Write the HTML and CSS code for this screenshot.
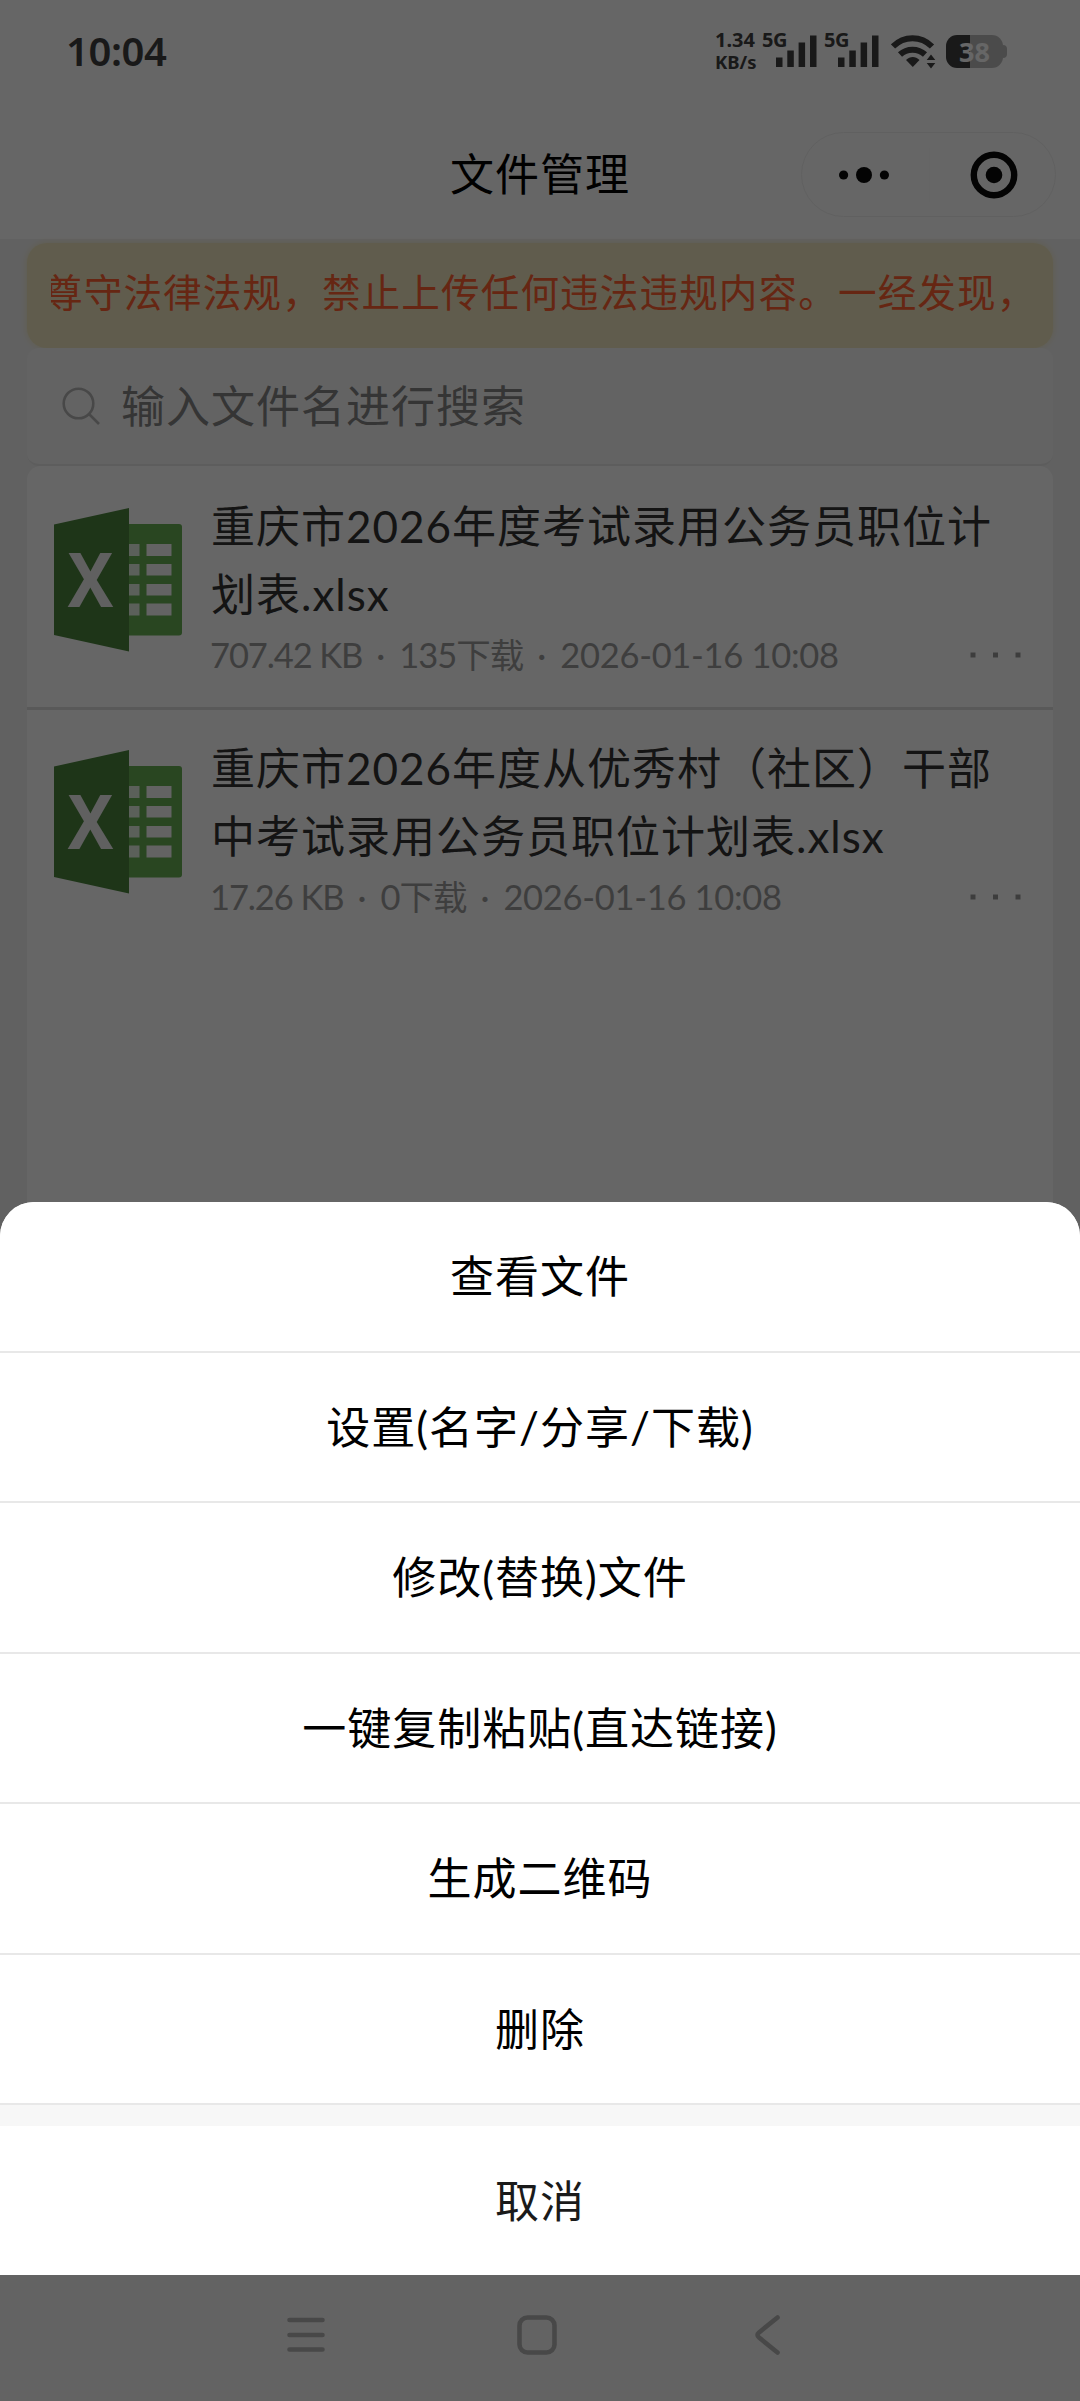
FILE: index.html
```html
<!DOCTYPE html>
<html lang="zh-CN">
<head>
<meta charset="utf-8">
<title>文件管理</title>
<link rel="stylesheet" href="styles.css">
</head>
<body>
<svg class="defs" width="0" height="0">
  <symbol id="xlsx" viewBox="0 0 128 144">
    <rect x="60" y="16" width="68" height="111.500" rx="3" fill="#66ae54"/>
    <path fill="#e4efe2" d="M75 36h10.500v12H75zM75 56h10.500v11.500H75zM75 76h10.500v11.500H75zM75 95.500h10.500v12H75z"/>
    <path fill="#f8f8f8" d="M92.500 36h25v12h-25zM92.500 56h25v11.500h-25zM92.500 76h25v11.500h-25zM92.500 95.500h25v12h-25z"/>
    <path fill="#4c843e" d="M0 16.500 75 0v143.500L0 127z"/>
    <text x="13.500" y="98.700" textLength="46" lengthAdjust="spacingAndGlyphs" class="xlsx-letter">X</text>
  </symbol>
  <symbol id="signal" viewBox="0 0 41 33">
    <path d="M0 22.500h6.500V32H0zM11.300 15.500h6.500V32h-6.500zM22.600 7.500h6.500V32h-6.500zM34 .500h6.500V32H34z"/>
  </symbol>
  <symbol id="more" viewBox="0 0 52 6">
    <path d="M.500.500h5v5h-5zM23 .500h5v5h-5zM45.500.500h5v5h-5z"/>
  </symbol>
</svg>
<div class="screen">
  <header class="status">
    <span class="clock">10:04</span>
    <div class="status-right">
      <div class="speed"><span class="speed-num">1.34</span><span>KB/s</span></div>
      <div class="cell"><span>5G</span><svg width="41" height="33"><use href="#signal"/></svg></div>
      <div class="cell"><span>5G</span><svg width="41" height="33"><use href="#signal"/></svg></div>
      <svg class="wifi" width="45" height="34" viewBox="0 0 45 34">
        <path d="M2 11.500C13 .500 30 .500 41 11.500" fill="none" stroke="#3f3f3f" stroke-width="6"/>
        <path d="M9 19.500c7-6.500 18-6.500 25 0" fill="none" stroke="#3f3f3f" stroke-width="6"/>
        <path d="M15 25c4-4 9.500-4 13.500 0l-6.700 7z"/>
        <path d="m40 19.500 4.300 5.500h-8.600zM40 33.500l4.300-5.500h-8.600z"/>
      </svg>
      <div class="battery"><span>38</span></div>
    </div>
  </header>
  <div class="titlebar">
    <h1>文件管理</h1>
    <div class="capsule">
      <svg width="50" height="18" viewBox="0 0 50 18"><circle cx="4.600" cy="9" r="4.600"/><circle cx="25" cy="9" r="8"/><circle cx="45.400" cy="9" r="4.600"/></svg>
      <i class="capsule-line"></i>
      <svg width="48" height="48" viewBox="0 0 48 48"><circle cx="24" cy="24" r="20.200" fill="none" stroke="#0b0b0b" stroke-width="6.400"/><circle cx="24" cy="24" r="8.300"/></svg>
    </div>
  </div>
  <main class="content">
    <div class="notice"><div class="notice-view"><p>尊守法律法规，禁止上传任何违法违规内容。一经发现，</p></div></div>
    <div class="search">
      <svg width="38" height="38" viewBox="0 0 38 38" fill="none" stroke="#b4b4b4" stroke-width="2.600"><circle cx="16.500" cy="16.500" r="14.800"/><path d="m27 27 10 10"/></svg>
      <span>输入文件名进行搜索</span>
    </div>
    <section class="list">
      <article class="file">
        <svg class="file-icon" width="128" height="144"><use href="#xlsx"/></svg>
        <div class="file-body">
          <h2>重庆市2026年度考试录用公务员职位计划表.xlsx</h2>
          <div class="meta"><span class="size">707.42 KB</span><span>·</span><span class="count">135下载</span><span>·</span><span class="date">2026-01-16 10:08</span><svg class="more" width="52" height="6"><use href="#more"/></svg></div>
        </div>
      </article>
      <article class="file">
        <svg class="file-icon" width="128" height="144"><use href="#xlsx"/></svg>
        <div class="file-body">
          <h2>重庆市2026年度从优秀村（社区）干部中考试录用公务员职位计划表.xlsx</h2>
          <div class="meta"><span class="size">17.26 KB</span><span>·</span><span class="count">0下载</span><span>·</span><span class="date">2026-01-16 10:08</span><svg class="more" width="52" height="6"><use href="#more"/></svg></div>
        </div>
      </article>
    </section>
  </main>
  <nav class="sysnav">
    <svg width="38" height="40" viewBox="0 0 38 40"><path d="M2.500 5h33M2.500 20h33M2.500 34.500h33"/></svg>
    <svg class="home" width="40" height="40" viewBox="0 0 40 40"><rect x="2.500" y="2.500" width="35" height="35" rx="8"/></svg>
    <svg width="28" height="40" viewBox="0 0 28 40"><path d="M24.500 2.500 6 17.500q-3 2.500 0 5L24.500 37.500"/></svg>
  </nav>
</div>
<div class="mask">
  <div class="sheet">
    <button>查看文件</button>
    <button>设置(名字/分享/下载)</button>
    <button>修改(替换)文件</button>
    <button>一键复制粘贴(直达链接)</button>
    <button>生成二维码</button>
    <button>删除</button>
    <button class="cancel">取消</button>
  </div>
</div>
</body>
</html>
```
FILE: styles.css
```css
* { box-sizing: border-box; }
body, h1, h2, p { margin: 0; font-weight: 400; }
body {
  position: relative;
  width: 1080px;
  height: 2401px;
  overflow: hidden;
  font-family: Lato, "Noto Sans CJK SC", sans-serif;
  font-size: 44px;
  letter-spacing: 1px;
  background: #fff;
}
svg { display: block; flex: none; }
.defs { position: absolute; }
.screen { display: flex; flex-direction: column; height: 2401px; }

/* status bar */
.status {
  display: flex;
  justify-content: space-between;
  height: 104px;
  padding: 0 72px 0 66px;
  color: #3f3f3f;
  fill: #3f3f3f;
  font-family: "Noto Sans", sans-serif;
  letter-spacing: 0;
}
.clock { padding-top: 30px; font-size: 40px; font-weight: 600; line-height: 42px; letter-spacing: -.4px; }
.status-right { display: flex; align-items: flex-start; padding-top: 29px; }
.speed {
  display: flex;
  flex-direction: column;
  width: 47px;
  font-size: 18.500px;
  font-weight: 700;
  line-height: 21.500px;
}
.speed-num { font-size: 20px; }
.cell { display: flex; width: 62px; padding-top: 6px; }
.cell span {
  width: 14px;
  margin-top: -6px;
  font-size: 20px;
  font-weight: 700;
  line-height: 22px;
  letter-spacing: -.5px;
}
.wifi { margin: 6px 10px 0 5px; }
.battery {
  position: relative;
  width: 57px;
  height: 33px;
  margin: 6px 5px 0 0;
  border-radius: 11px;
  background: linear-gradient(90deg, #3f3f3f 24px, #bcbcbc 24px);
  color: #fff;
  font-size: 27px;
  font-weight: 700;
  line-height: 34px;
  text-align: center;
}
.battery::after {
  content: "";
  position: absolute;
  left: 57px;
  top: 10px;
  width: 4px;
  height: 13px;
  border-radius: 0 4px 4px 0;
  background: #bcbcbc;
}

/* mini program title bar */
.titlebar {
  display: grid;
  grid-template-columns: 1fr auto 1fr;
  align-items: center;
  height: 135px;
  padding: 0 24px;
}
.titlebar h1 { grid-column: 2; padding-top: 5px; font-size: 44px; line-height: 60px; }
.capsule {
  display: flex;
  align-items: center;
  justify-self: end;
  justify-content: space-between;
  width: 255px;
  height: 85px;
  margin-top: 6px;
  padding: 0 37px;
  border: 1px solid #f1f1f1;
  border-radius: 43px;
  fill: #0b0b0b;
}
.capsule-line { width: 1px; height: 54px; margin-right: 1px; background: #fcfcfc; }

/* page */
.content { flex: 1; padding: 4px 27px 0; background: #f3f3f3; }
.notice {
  height: 105px;
  padding: 0 24px;
  border-radius: 20px;
  background: #f0e7c0;
  box-shadow: 0 0 7px #f0e7c0;
}
.notice-view { overflow: hidden; }
.notice p {
  margin-left: -7px;
  color: #ff6030;
  font-size: 38.600px;
  line-height: 98px;
  letter-spacing: 1.120px;
  white-space: nowrap;
}
.search {
  display: flex;
  align-items: center;
  gap: 21px;
  height: 118px;
  padding: 0 35px 2px;
  border-bottom: 2px solid #e8e8e8;
  border-radius: 12px;
  background: #f8f8f8;
  color: #858585;
}
.search svg { margin-top: 2px; }
.search span { margin-top: -3px; }
.list { height: 1000px; border-radius: 14px 14px 0 0; background: #fff; }
.file {
  display: flex;
  height: 241px;
  padding: 24px 28px 0 27px;
}
.file + .file { padding-top: 22px; border-top: 3px solid #dedede; }
.file-icon { margin-top: 18px; }
.file-body { flex: 1; margin: 3px 0 0 28px; min-width: 0; }
.file h2 { width: 800px; padding-left: 1px; color: #333; font-size: 44px; line-height: 67.500px; }
.meta {
  display: flex;
  align-items: center;
  gap: 14px;
  color: #9c9c9c;
  font-size: 34.500px;
  line-height: 54px;
  letter-spacing: 0;
  white-space: nowrap;
}
.size { letter-spacing: -1.100px; }
.count { letter-spacing: -1px; }
.date { letter-spacing: -.300px; }
.more { margin: 0 3px 0 auto; fill: #999; }
.xlsx-letter { font: 700 76px "Noto Sans", sans-serif; letter-spacing: 0; fill: #efefef; }

/* system navigation */
.sysnav {
  display: flex;
  align-items: center;
  justify-content: space-between;
  height: 126px;
  padding: 0 299px 7px 287px;
  background: #f7f7f7;
  fill: none;
  stroke: #b4b4b4;
  stroke-width: 4.600;
  stroke-linecap: round;
}
.home { margin-right: 5px; }

/* action sheet */
.mask {
  position: absolute;
  inset: 0;
  display: flex;
  flex-direction: column;
  justify-content: flex-end;
  padding-bottom: 126px;
  background: rgba(0, 0, 0, .6);
}
.sheet {
  display: flex;
  flex-direction: column;
  height: 1073px;
  overflow: hidden;
  border-radius: 34px 34px 0 0;
  background: #f7f7f7;
}
.sheet button {
  flex: 1;
  padding: 0 0 4px;
  border: 0;
  border-bottom: 2px solid #e8e8e8;
  background: #fff;
  color: #000;
  font: inherit;
  letter-spacing: 1px;
}
.sheet .cancel { flex: none; height: 149px; margin-top: 21px; border: 0; color: #1a1a1a; }
```
